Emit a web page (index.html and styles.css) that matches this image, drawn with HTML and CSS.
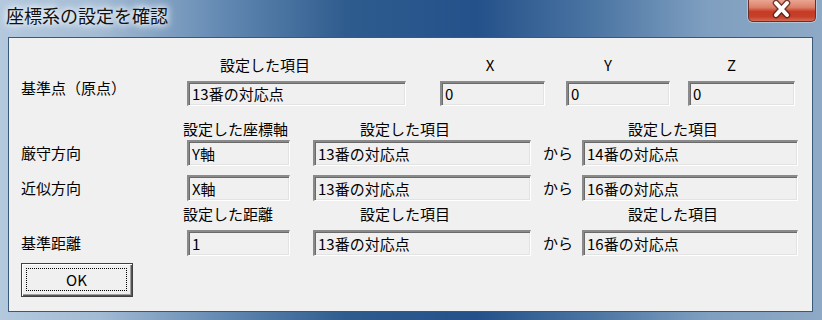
FILE: index.html
```html
<!DOCTYPE html>
<html lang="ja">
<head>
<meta charset="utf-8">
<title>座標系の設定を確認</title>
<link rel="stylesheet" href="styles.css">
</head>
<body>
<div class="window">
  <div class="titlebar">
    <div class="title">座標系の設定を確認</div>
    <div class="close">
      <svg width="68" height="22" viewBox="0 0 68 22">
        <path d="M28 4 L39 16 M39 4 L28 16" stroke="#4a1810" stroke-width="6.5" stroke-linecap="round" fill="none" opacity="0.75"/>
        <path d="M28 4 L39 16 M39 4 L28 16" stroke="#ffffff" stroke-width="4" stroke-linecap="round" fill="none"/>
      </svg>
    </div>
  </div>
  <div class="client">
    <div class="form">
      <div class="row hdr">
        <span class="c-lbl"></span>
        <span class="c-wide hdr-item">設定した項目</span>
        <span class="c-x hdr-x">X</span>
        <span class="c-y hdr-y">Y</span>
        <span class="c-z hdr-z">Z</span>
      </div>
      <div class="row frow frow-1">
        <span class="c-lbl label label-up">基準点（原点）</span>
        <span class="field c-wide">13番の対応点</span>
        <span class="field c-x">0</span>
        <span class="field c-y">0</span>
        <span class="field c-z">0</span>
      </div>
      <div class="row hdr hdr-2">
        <span class="c-lbl"></span>
        <span class="c-a hdr-axis">設定した座標軸</span>
        <span class="c-b hdr-b">設定した項目</span>
        <span class="c-kara"></span>
        <span class="c-c hdr-c">設定した項目</span>
      </div>
      <div class="row frow frow-2">
        <span class="c-lbl label">厳守方向</span>
        <span class="field c-a">Y軸</span>
        <span class="field c-b">13番の対応点</span>
        <span class="c-kara kara">から</span>
        <span class="field c-c">14番の対応点</span>
      </div>
      <div class="row frow frow-3">
        <span class="c-lbl label">近似方向</span>
        <span class="field c-a">X軸</span>
        <span class="field c-b">13番の対応点</span>
        <span class="c-kara kara">から</span>
        <span class="field c-c">16番の対応点</span>
      </div>
      <div class="row hdr hdr-4">
        <span class="c-lbl"></span>
        <span class="c-a hdr-axis">設定した距離</span>
        <span class="c-b hdr-b">設定した項目</span>
        <span class="c-kara"></span>
        <span class="c-c hdr-c">設定した項目</span>
      </div>
      <div class="row frow frow-4">
        <span class="c-lbl label">基準距離</span>
        <span class="field c-a">1</span>
        <span class="field c-b">13番の対応点</span>
        <span class="c-kara kara">から</span>
        <span class="field c-c">16番の対応点</span>
      </div>
      <div class="btnrow">
        <div class="ok"><span class="ok-inner">OK</span></div>
      </div>
    </div>
  </div>
</div>
</body>
</html>
```
FILE: styles.css
```css
html, body {
  margin: 0;
  padding: 0;
}
body {
  width: 822px;
  height: 320px;
  overflow: hidden;
  font-family: "Noto Sans CJK JP", "Noto Sans", sans-serif;
  font-size: 15px;
  color: #000;
}
.window {
  width: 822px;
  height: 320px;
  display: flex;
  flex-direction: column;
  background: linear-gradient(to right, #b4c9de 0%, #a3bbd4 12%, #5f86b0 28%, #2f5c8e 42%, #24518a 58%, #4a74a2 72%, #7f9fc0 86%, #8ea9c5 100%);
}
.titlebar {
  height: 37px;
  flex: none;
  display: flex;
  justify-content: space-between;
  align-items: flex-start;
}
.title {
  margin-top: 3px;
  padding-left: 6px;
  font-size: 18px;
  line-height: 24px;
  color: #111;
  text-shadow: 0 0 6px #ffffff, 0 0 8px #e8f0f8, 0 0 10px #dfe9f3;
}
.close {
  width: 68px;
  height: 22px;
  margin-right: 6px;
  box-sizing: border-box;
  border: 1px solid #6b2d26;
  border-top: none;
  border-radius: 0 0 5px 5px;
  background: linear-gradient(to bottom, #e9a592 0%, #dc8069 35%, #c73b24 55%, #c5402a 80%, #d66a52 100%);
  box-shadow: 0 0 0 1px rgba(255,255,255,0.35);
}
.close svg {
  display: block;
  margin: -1px 0 0 -1px;
}
.client {
  flex: 1;
  margin: 0 9px 8px 8px;
  border: 1px solid #38597a;
  background: #f0f0f0;
}
.form {
  padding: 18px 0 0 12px;
  display: flex;
  flex-direction: column;
}
.row {
  display: flex;
}
.hdr {
  height: 18px;
  line-height: 18px;
}
.hdr-2 { margin-top: 14px; }
.hdr-4 { margin-top: 4px; }
.frow {
  align-items: center;
}
.frow-1 { margin-top: 7px; height: 25px; align-items: flex-start; }
.frow-2 { margin-top: 2px; height: 26px; }
.frow-3 { margin-top: 9px; height: 26px; }
.frow-4 { margin-top: 7px; height: 26px; }

.c-lbl { width: 166px; flex: none; }
.c-wide { width: 219px; flex: none; }
.c-x { width: 105px; flex: none; margin-left: 34px; }
.c-y { width: 104px; flex: none; margin-left: 21px; }
.c-z { width: 107px; flex: none; margin-left: 18px; }
.c-a { width: 103px; flex: none; }
.c-b { width: 218px; flex: none; margin-left: 23px; }
.c-kara { width: 35px; flex: none; margin-left: 12px; }
.c-c { width: 216px; flex: none; margin-left: 4px; }

.label {
  line-height: 18px;
  white-space: nowrap;
}
.label-up { margin-top: -2px; }

.hdr-item { padding-left: 33px; box-sizing: border-box; }
.hdr-x { text-align: center; padding-right: 5px; box-sizing: border-box; }
.hdr-y { text-align: center; padding-right: 20px; box-sizing: border-box; }
.hdr-z { text-align: center; padding-right: 20px; box-sizing: border-box; }
.hdr-axis { margin-left: -4px; width: 107px; white-space: nowrap; }
.hdr-b { padding-left: 47px; box-sizing: border-box; }
.hdr-c { padding-left: 46px; box-sizing: border-box; }

.field {
  height: 100%;
  box-sizing: border-box;
  display: flex;
  align-items: center;
  padding-left: 3px;
  background: #f0f0f0;
  border-top: 2px solid #8a8a8a;
  border-left: 2px solid #8a8a8a;
  border-bottom: 1px solid #ffffff;
  border-right: 1px solid #ffffff;
  box-shadow: inset 1px 1px 0 #6a6a6a, inset -1px -1px 0 #e3e3e3;
  white-space: nowrap;
  line-height: 18px;
}
.kara {
  line-height: 18px;
}

.btnrow {
  display: flex;
  margin-top: 7px;
}
.ok {
  width: 112px;
  height: 34px;
  box-sizing: border-box;
  display: flex;
  border: 1px solid #404040;
  background: #f0f0f0;
  box-shadow: inset 1px 1px 0 #ffffff, inset -1px -1px 0 #555555, inset -2px -2px 0 #a0a0a0;
}
.ok-inner {
  flex: 1;
  margin: 4px 5px 5px 4px;
  border: 1px dotted #000;
  display: flex;
  align-items: center;
  justify-content: center;
  font-family: "Noto Sans CJK JP", "Noto Sans", sans-serif;
  font-size: 15px;
  line-height: 18px;
}
```
